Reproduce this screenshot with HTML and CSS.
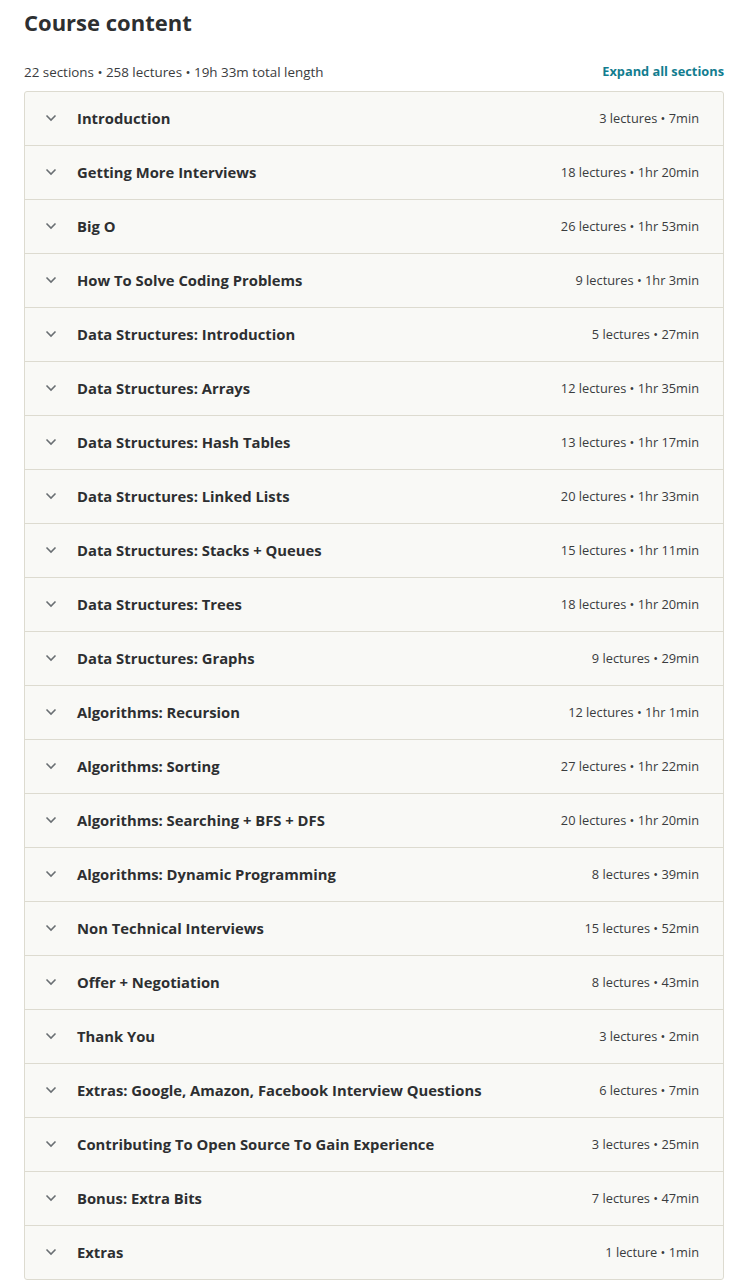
FILE: index.html
```html
<!DOCTYPE html>
<html lang="en">
<head>
<meta charset="utf-8">
<title>Course content</title>
<link rel="stylesheet" href="styles.css">
</head>
<body>
<div class="page">
  <h2 class="title">Course content</h2>
  <div class="summary">
    <span class="summary-text">22 sections • 258 lectures • 19h 33m total length</span>
    <button class="expand">Expand all sections</button>
  </div>
  <div class="sections">
    <div class="section"><span class="chev"><svg viewBox="0 0 12 8" width="12" height="8"><path d="M1.5 1.5 L6 6 L10.5 1.5" fill="none" stroke="currentColor" stroke-width="1.6"/></svg></span><span class="name">Introduction</span><span class="meta">3 lectures • 7min</span></div>
    <div class="section"><span class="chev"><svg viewBox="0 0 12 8" width="12" height="8"><path d="M1.5 1.5 L6 6 L10.5 1.5" fill="none" stroke="currentColor" stroke-width="1.6"/></svg></span><span class="name">Getting More Interviews</span><span class="meta">18 lectures • 1hr 20min</span></div>
    <div class="section"><span class="chev"><svg viewBox="0 0 12 8" width="12" height="8"><path d="M1.5 1.5 L6 6 L10.5 1.5" fill="none" stroke="currentColor" stroke-width="1.6"/></svg></span><span class="name">Big O</span><span class="meta">26 lectures • 1hr 53min</span></div>
    <div class="section"><span class="chev"><svg viewBox="0 0 12 8" width="12" height="8"><path d="M1.5 1.5 L6 6 L10.5 1.5" fill="none" stroke="currentColor" stroke-width="1.6"/></svg></span><span class="name">How To Solve Coding Problems</span><span class="meta">9 lectures • 1hr 3min</span></div>
    <div class="section"><span class="chev"><svg viewBox="0 0 12 8" width="12" height="8"><path d="M1.5 1.5 L6 6 L10.5 1.5" fill="none" stroke="currentColor" stroke-width="1.6"/></svg></span><span class="name">Data Structures: Introduction</span><span class="meta">5 lectures • 27min</span></div>
    <div class="section"><span class="chev"><svg viewBox="0 0 12 8" width="12" height="8"><path d="M1.5 1.5 L6 6 L10.5 1.5" fill="none" stroke="currentColor" stroke-width="1.6"/></svg></span><span class="name">Data Structures: Arrays</span><span class="meta">12 lectures • 1hr 35min</span></div>
    <div class="section"><span class="chev"><svg viewBox="0 0 12 8" width="12" height="8"><path d="M1.5 1.5 L6 6 L10.5 1.5" fill="none" stroke="currentColor" stroke-width="1.6"/></svg></span><span class="name">Data Structures: Hash Tables</span><span class="meta">13 lectures • 1hr 17min</span></div>
    <div class="section"><span class="chev"><svg viewBox="0 0 12 8" width="12" height="8"><path d="M1.5 1.5 L6 6 L10.5 1.5" fill="none" stroke="currentColor" stroke-width="1.6"/></svg></span><span class="name">Data Structures: Linked Lists</span><span class="meta">20 lectures • 1hr 33min</span></div>
    <div class="section"><span class="chev"><svg viewBox="0 0 12 8" width="12" height="8"><path d="M1.5 1.5 L6 6 L10.5 1.5" fill="none" stroke="currentColor" stroke-width="1.6"/></svg></span><span class="name">Data Structures: Stacks + Queues</span><span class="meta">15 lectures • 1hr 11min</span></div>
    <div class="section"><span class="chev"><svg viewBox="0 0 12 8" width="12" height="8"><path d="M1.5 1.5 L6 6 L10.5 1.5" fill="none" stroke="currentColor" stroke-width="1.6"/></svg></span><span class="name">Data Structures: Trees</span><span class="meta">18 lectures • 1hr 20min</span></div>
    <div class="section"><span class="chev"><svg viewBox="0 0 12 8" width="12" height="8"><path d="M1.5 1.5 L6 6 L10.5 1.5" fill="none" stroke="currentColor" stroke-width="1.6"/></svg></span><span class="name">Data Structures: Graphs</span><span class="meta">9 lectures • 29min</span></div>
    <div class="section"><span class="chev"><svg viewBox="0 0 12 8" width="12" height="8"><path d="M1.5 1.5 L6 6 L10.5 1.5" fill="none" stroke="currentColor" stroke-width="1.6"/></svg></span><span class="name">Algorithms: Recursion</span><span class="meta">12 lectures • 1hr 1min</span></div>
    <div class="section"><span class="chev"><svg viewBox="0 0 12 8" width="12" height="8"><path d="M1.5 1.5 L6 6 L10.5 1.5" fill="none" stroke="currentColor" stroke-width="1.6"/></svg></span><span class="name">Algorithms: Sorting</span><span class="meta">27 lectures • 1hr 22min</span></div>
    <div class="section"><span class="chev"><svg viewBox="0 0 12 8" width="12" height="8"><path d="M1.5 1.5 L6 6 L10.5 1.5" fill="none" stroke="currentColor" stroke-width="1.6"/></svg></span><span class="name">Algorithms: Searching + BFS + DFS</span><span class="meta">20 lectures • 1hr 20min</span></div>
    <div class="section"><span class="chev"><svg viewBox="0 0 12 8" width="12" height="8"><path d="M1.5 1.5 L6 6 L10.5 1.5" fill="none" stroke="currentColor" stroke-width="1.6"/></svg></span><span class="name">Algorithms: Dynamic Programming</span><span class="meta">8 lectures • 39min</span></div>
    <div class="section"><span class="chev"><svg viewBox="0 0 12 8" width="12" height="8"><path d="M1.5 1.5 L6 6 L10.5 1.5" fill="none" stroke="currentColor" stroke-width="1.6"/></svg></span><span class="name">Non Technical Interviews</span><span class="meta">15 lectures • 52min</span></div>
    <div class="section"><span class="chev"><svg viewBox="0 0 12 8" width="12" height="8"><path d="M1.5 1.5 L6 6 L10.5 1.5" fill="none" stroke="currentColor" stroke-width="1.6"/></svg></span><span class="name">Offer + Negotiation</span><span class="meta">8 lectures • 43min</span></div>
    <div class="section"><span class="chev"><svg viewBox="0 0 12 8" width="12" height="8"><path d="M1.5 1.5 L6 6 L10.5 1.5" fill="none" stroke="currentColor" stroke-width="1.6"/></svg></span><span class="name">Thank You</span><span class="meta">3 lectures • 2min</span></div>
    <div class="section"><span class="chev"><svg viewBox="0 0 12 8" width="12" height="8"><path d="M1.5 1.5 L6 6 L10.5 1.5" fill="none" stroke="currentColor" stroke-width="1.6"/></svg></span><span class="name">Extras: Google, Amazon, Facebook Interview Questions</span><span class="meta">6 lectures • 7min</span></div>
    <div class="section"><span class="chev"><svg viewBox="0 0 12 8" width="12" height="8"><path d="M1.5 1.5 L6 6 L10.5 1.5" fill="none" stroke="currentColor" stroke-width="1.6"/></svg></span><span class="name">Contributing To Open Source To Gain Experience</span><span class="meta">3 lectures • 25min</span></div>
    <div class="section"><span class="chev"><svg viewBox="0 0 12 8" width="12" height="8"><path d="M1.5 1.5 L6 6 L10.5 1.5" fill="none" stroke="currentColor" stroke-width="1.6"/></svg></span><span class="name">Bonus: Extra Bits</span><span class="meta">7 lectures • 47min</span></div>
    <div class="section"><span class="chev"><svg viewBox="0 0 12 8" width="12" height="8"><path d="M1.5 1.5 L6 6 L10.5 1.5" fill="none" stroke="currentColor" stroke-width="1.6"/></svg></span><span class="name">Extras</span><span class="meta">1 lecture • 1min</span></div>
  </div>
</div>
</body>
</html>
```

FILE: styles.css
```css
* { box-sizing: border-box; }
html, body { margin: 0; padding: 0; background: #ffffff; }
body {
  font-family: "Open Sans", "Noto Sans", Arial, sans-serif;
  color: #2d2f31;
}
.page {
  padding: 6px 11px 0 24px;
}
.title {
  margin: 0;
  font-size: 22px;
  line-height: 32px;
  font-weight: 700;
  color: #2d2f31;
}
.summary {
  display: flex;
  justify-content: space-between;
  align-items: flex-end;
  margin-top: 25px;
  height: 18px;
  margin-bottom: 10px;
}
.summary-text {
  font-size: 13.4px;
  line-height: 18px;
  color: #3a3c3e;
}
.expand {
  border: 0;
  background: none;
  padding: 0;
  margin: 0 0 1px 0;
  font-family: inherit;
  font-size: 12.8px;
  line-height: 18px;
  font-weight: 700;
  color: #127d8f;
  cursor: pointer;
}
.sections {
  width: 700px;
  border: 1px solid #dddbd0;
  border-radius: 3px;
  background: #f9f9f6;
}
.section {
  display: flex;
  align-items: center;
  height: 54px;
  padding: 0 24px 2px 20px;
  border-bottom: 1px solid #dddbd0;
}
.section:last-child { border-bottom: 0; height: 53px; }
.chev {
  width: 12px;
  height: 8px;
  color: #6a6f73;
  display: flex;
  margin-right: 20px;
}
.chev svg { display: block; }
.name {
  flex: 1;
  font-size: 14.8px;
  font-weight: 700;
  color: #2d2f31;
}
.meta {
  font-size: 12.8px;
  color: #3a3c3e;
}
```
